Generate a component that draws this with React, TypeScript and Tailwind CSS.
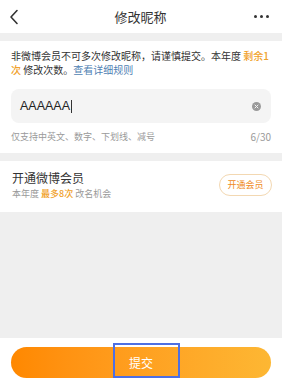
import React from "react";

export default function App() {
  return (
    <div
      className="w-[282px] h-[383px] flex flex-col bg-[#efefef] overflow-hidden"
      style={{ fontFamily: '"Noto Sans CJK SC", "Noto Sans", sans-serif' }}
    >
      {/* header */}
      <div className="h-[33px] bg-white flex items-center px-[9px]">
        <svg width="10" height="16" viewBox="0 0 10 16" className="shrink-0">
          <path d="M8 1.5 L2 8 L8 14.5" fill="none" stroke="#333" strokeWidth="1.6" strokeLinecap="round" strokeLinejoin="round" />
        </svg>
        <div className="flex-1 text-center text-[13px] text-[#333] leading-[16px] pl-[8px]">修改昵称</div>
        <div className="flex items-center gap-[3px] pr-[4px] shrink-0">
          <span className="w-[3px] h-[3px] rounded-full bg-[#333]" />
          <span className="w-[3px] h-[3px] rounded-full bg-[#333]" />
          <span className="w-[3px] h-[3px] rounded-full bg-[#333]" />
        </div>
      </div>

      {/* section 1 */}
      <div className="mt-[8px] bg-white px-[11px] pt-[8px] pb-[9px]">
        <p className="text-[10px] leading-[14px] text-[#333]">
          非微博会员不可多次修改昵称，请谨慎提交。本年度 <span className="text-[#f0a12a] font-medium">剩余1次</span> 修改次数。<span className="text-[#4f7fb3]">查看详细规则</span>
        </p>
        <div className="mt-[12px] h-[34px] rounded-[8px] bg-[#f4f4f4] flex items-center pl-[9px] pr-[10px]">
          <span className="text-[12.5px] text-[#222] font-medium" style={{ fontFamily: '"Liberation Sans", Arial, sans-serif' }}>AAAAAA</span>
          <span className="w-[1px] h-[13px] bg-[#333] ml-[1px]" />
          <div className="flex-1" />
          <div className="w-[9px] h-[9px] rounded-full bg-[#9a9a9a] flex items-center justify-center">
            <svg width="5" height="5" viewBox="0 0 5 5">
              <path d="M1 1 L4 4 M4 1 L1 4" stroke="#f4f4f4" strokeWidth="1" strokeLinecap="round" />
            </svg>
          </div>
        </div>
        <div className="mt-[7px] flex items-center justify-between text-[9px] leading-[14px] text-[#9a9a9a]">
          <span>仅支持中英文、数字、下划线、减号</span>
          <span className="text-[10px]">6/30</span>
        </div>
      </div>

      {/* section 2 */}
      <div className="mt-[8px] bg-white pl-[12px] pr-[10px] pt-[9px] pb-[12px] flex items-center">
        <div className="flex-1">
          <div className="text-[12px] leading-[16px] text-[#333]">开通微博会员</div>
          <div className="text-[9px] leading-[13px] text-[#999] mt-[1px]">
            本年度 <span className="text-[#f0a12a] font-medium">最多8次</span> 改名机会
          </div>
        </div>
        <div className="w-[53px] h-[22px] rounded-full border border-[#f3d8b2] flex items-center justify-center text-[9px] text-[#ef8a1c]">
          开通会员
        </div>
      </div>

      <div className="flex-1" />

      {/* bottom */}
      <div className="relative h-[45px] bg-white px-[11px] pt-[9px]">
        <div className="h-[31px] rounded-full bg-gradient-to-r from-[#ff8800] to-[#fdb733] flex items-center justify-center text-[12px] text-white">
          提交
        </div>
        <div className="absolute left-[113px] top-[5px] w-[67px] h-[35px] border-2 border-[#4d6fe3]" />
      </div>
    </div>
  );
}
